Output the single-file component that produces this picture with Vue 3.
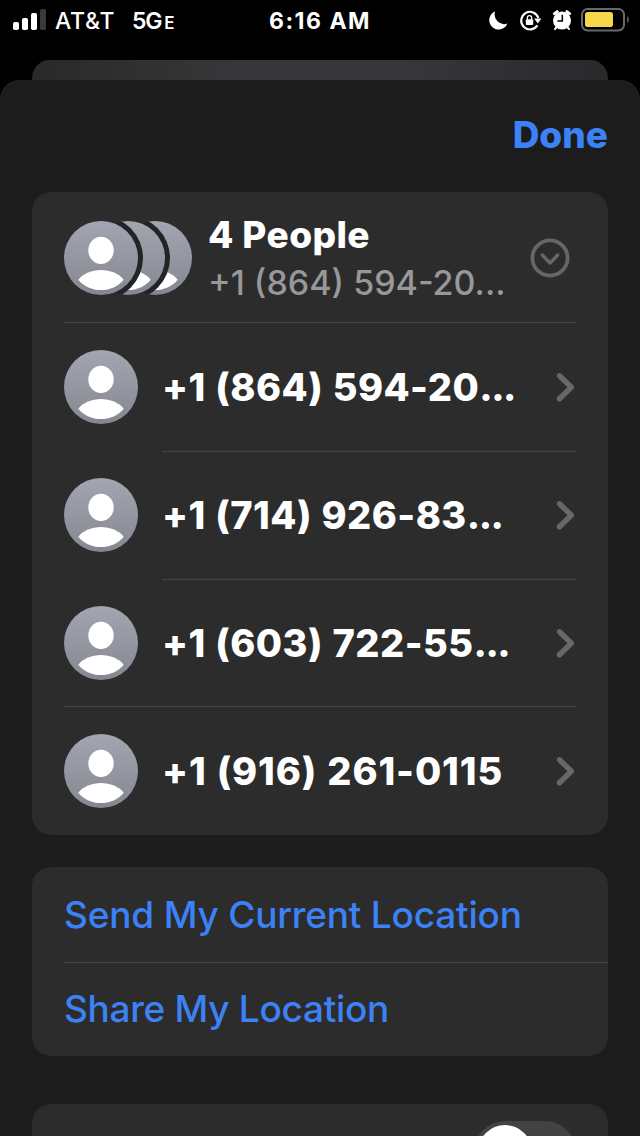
<template>
  <div class="screen">
    <header class="status">
      <div class="carrier">
        <svg class="signal" width="34" height="22" viewBox="0 0 34 22">
          <rect x="0" y="13" width="6" height="8" rx="1.8" fill="#fff" />
          <rect x="9" y="9" width="6" height="12" rx="1.8" fill="#fff" />
          <rect x="18" y="4" width="6" height="17" rx="1.8" fill="#fff" />
          <rect x="27" y="0" width="6" height="21" rx="1.8" fill="#3a3a3a" />
        </svg>
        <span class="name">AT&amp;T</span>
        <span class="network">5G<small>E</small></span>
      </div>
      <div class="time">6:16 AM</div>
      <svg class="indicators" width="146" height="28" viewBox="486 6 146 28">
        <path d="M495.2 11.4A9.4 9.4 0 1 0 507.4 23.6A9.6 9.6 0 0 1 495.2 11.4Z" fill="#fff" />
        <path d="M537.4 25.4A8.8 8.8 0 1 1 538.4 18" fill="none" stroke="#fff" stroke-width="2.1" />
        <path d="M534.2 18.4H541.4L537.8 23.4Z" fill="#fff" />
        <rect x="525.8" y="19.2" width="7.4" height="5.8" rx="1" fill="#fff" />
        <path d="M527.4 19.5V17.8a2.1 2.1 0 0 1 4.2 0V19.5" fill="none" stroke="#fff" stroke-width="1.3" />
        <circle cx="562" cy="20.6" r="9" fill="#fff" />
        <path d="M554.4 13.6L557.2 11.6M569.6 13.6L566.8 11.6" stroke="#fff" stroke-width="3" stroke-linecap="round" />
        <path d="M556.8 27L555 29M567.2 27L569 29" stroke="#fff" stroke-width="2" stroke-linecap="round" />
        <path d="M562.3 14.8V21H557.4" fill="none" stroke="#000" stroke-width="1.5" />
        <rect x="582" y="9" width="42" height="21.4" rx="5.5" fill="none" stroke="#69696b" stroke-width="2" />
        <rect x="585" y="12" width="28" height="15" rx="2.8" fill="#f5d84b" />
        <path d="M627.2 16C629.4 17.5 629.4 21.5 627.2 23Z" fill="#69696b" />
      </svg>
    </header>

    <div class="behind"></div>

    <main class="sheet">
      <div class="toolbar">
        <button class="done">Done</button>
      </div>

      <section class="card people">
        <div class="group">
          <svg class="stack" width="128" height="74" viewBox="0 0 128 74">
            <defs>
              <linearGradient id="gray" x1="0" y1="0" x2="0" y2="1">
                <stop offset="0" stop-color="#a3a6b2" />
                <stop offset="1" stop-color="#858790" />
              </linearGradient>
              <clipPath id="disc"><circle cx="37" cy="37" r="37.4" /></clipPath>
            </defs>
            <g v-for="x in [54, 27, 0]" :key="x" :transform="`translate(${x} 0)`">
              <circle cx="37" cy="37" r="37" fill="url(#gray)" />
              <ellipse cx="37" cy="29.4" rx="12.7" ry="13.7" fill="#fff" />
              <path :d="shoulders" fill="#fff" />
              <circle v-if="x" cx="10" cy="37" r="42" fill="#222525" clip-path="url(#disc)" />
            </g>
          </svg>
          <div class="summary">
            <h1>4 People</h1>
            <p>+1 (864) 594-20...</p>
          </div>
          <svg class="expand" width="40" height="40" viewBox="0 0 40 40">
            <circle cx="20" cy="20" r="17.6" stroke-width="3.8" />
            <path d="M12.3 17L20 25L27.7 17" stroke-width="3.4" />
          </svg>
        </div>

        <div v-for="person in people" :key="person.number" class="person">
          <svg class="avatar" width="74" height="74" viewBox="0 0 74 74">
            <circle cx="37" cy="37" r="37" fill="url(#gray)" />
            <ellipse cx="37" cy="29.4" rx="12.7" ry="13.7" fill="#fff" />
            <path :d="shoulders" fill="#fff" />
          </svg>
          <span class="number">{{ person.number }}<span v-if="person.cut" class="dots">...</span></span>
          <svg class="chevron" width="20" height="30" viewBox="0 0 20 30">
            <path d="M3.5 3.8L15.3 15.3L3.5 26.8" />
          </svg>
        </div>
      </section>

      <section class="card location">
        <button class="send">Send My Current Location</button>
        <button class="share">Share My Location</button>
      </section>

      <section class="card alerts">
        <div class="toggle"><span></span></div>
      </section>
    </main>
  </div>
</template>

<script setup>
const people = [
  { number: '+1 (864) 594-20', cut: true },
  { number: '+1 (714) 926-83', cut: true },
  { number: '+1 (603) 722-55', cut: true },
  { number: '+1 (916) 261-0115', cut: false },
]

const shoulders =
  'M14.3 58.7C19 52.5 28 49 37 49S55 52.5 59.7 58.7C54 65.5 46 69 37 69S20 65.5 14.3 58.7Z'
</script>

<style>
body {
  background: #000;
  overflow: hidden;
}
</style>

<style scoped>
.screen {
  width: 640px;
  height: 1136px;
  overflow: hidden;
  display: flex;
  flex-direction: column;
  background: #000;
  color: #fff;
  font-family: Inter, 'Liberation Sans', sans-serif;
}

.status {
  display: grid;
  grid-template-columns: 1fr auto 1fr;
  height: 60px;
  flex: none;
  box-sizing: border-box;
  padding: 6px 8px 0 13px;
}

.carrier {
  display: flex;
  height: 28px;
  line-height: 30px;
  font-size: 23px;
  font-weight: 500;
}

.signal {
  margin-top: 3px;
}

.name {
  margin-left: 8px;
  width: 77px;
  letter-spacing: 0.7px;
}

.network {
  letter-spacing: -1.2px;
  font-weight: 600;
}

.network small {
  font-size: 17px;
  margin-left: 3px;
}

.time {
  height: 28px;
  line-height: 30px;
  margin-left: -5px;
  font-size: 23px;
  font-weight: 700;
  letter-spacing: 1.5px;
}

.indicators {
  justify-self: end;
}

.behind {
  flex: none;
  height: 20px;
  margin: 0 32px;
  border-radius: 18px 18px 0 0;
  background: linear-gradient(90deg, #29292a, #373739 35%, #373739 65%, #29292b);
}

.sheet {
  flex: none;
  height: 1056px;
  overflow: hidden;
  border-radius: 19px 19px 0 0;
  background: #1c1c1c;
}

.toolbar {
  box-sizing: border-box;
  height: 112px;
  display: flex;
  justify-content: flex-end;
  align-items: center;
  padding: 0 32px 4px 0;
}

button {
  border: 0;
  padding: 0;
  background: none;
  color: #3b82f6;
  font-family: inherit;
  font-size: 37px;
  text-align: left;
}

.done {
  font-weight: 800;
}

.card {
  margin: 0 32px;
  border-radius: 19px;
  background: #2c2c2c;
}

.people {
  height: 643px;
}

.group {
  box-sizing: border-box;
  display: flex;
  align-items: center;
  height: 131px;
  padding-top: 2px;
  margin: 0 32px;
  border-bottom: 1px solid #454545;
}

.stack {
  flex: none;
}

.summary {
  flex: 1;
  margin-left: 16px;
  white-space: nowrap;
}

.summary h1 {
  margin: 0;
  font-size: 37px;
  line-height: 48px;
  font-weight: 800;
  letter-spacing: 0.4px;
}

.summary p {
  margin: 0;
  font-size: 34px;
  line-height: 47px;
  font-weight: 500;
  color: #98989a;
}

.expand {
  flex: none;
  margin-right: 6px;
  fill: none;
  stroke: #666;
  stroke-linecap: round;
  stroke-linejoin: round;
}

.person {
  box-sizing: border-box;
  display: flex;
  align-items: center;
  height: 128px;
  margin: 0 32px;
  background: linear-gradient(#454545, #454545) 98px 100% / 100% 1px no-repeat;
}

.person:nth-child(2) {
  height: 129px;
  padding-bottom: 1px;
}

.person:nth-child(3) {
  padding-bottom: 2px;
}

.person:nth-child(4) {
  height: 127px;
  padding-bottom: 1px;
  background-position-x: 0;
}

.person:last-child {
  background: none;
}

.avatar {
  flex: none;
}

.number {
  flex: 1;
  margin-left: 24px;
  font-size: 38px;
  font-weight: 800;
  letter-spacing: 0.45px;
  word-spacing: 0.8px;
  white-space: nowrap;
}

.person:last-child .number {
  letter-spacing: 0.9px;
}

.dots {
  letter-spacing: -1.5px;
}

.chevron {
  flex: none;
  fill: none;
  stroke: #68686a;
  stroke-width: 5.4;
  stroke-linecap: round;
  stroke-linejoin: round;
}

.location {
  display: flex;
  flex-direction: column;
  height: 189px;
  margin-top: 32px;
}

.location button {
  height: 91px;
  margin-left: 32px;
  font-weight: 500;
  letter-spacing: -0.2px;
}

.location .share {
  letter-spacing: -0.3px;
}

.location .send {
  height: 96px;
  border-bottom: 1px solid #454545;
}

.alerts {
  display: flex;
  justify-content: flex-end;
  height: 120px;
  margin-top: 48px;
}

.toggle {
  width: 102px;
  height: 62px;
  margin: 17px 32px 0 0;
  border-radius: 31px;
  background: #434346;
}

.toggle span {
  display: block;
  width: 54px;
  height: 54px;
  margin: 4px;
  border-radius: 50%;
  background: #fff;
}
</style>
